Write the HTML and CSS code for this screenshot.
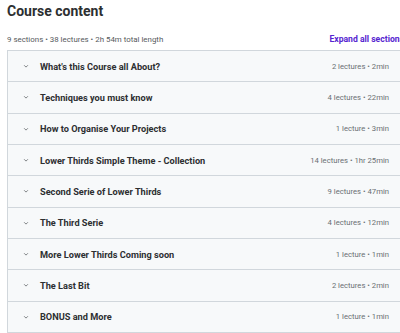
FILE: index.html
```html
<!DOCTYPE html>
<html>
<head>
<meta charset="utf-8">
<link rel="stylesheet" href="styles.css">
</head>
<body>
<div class="page">
  <h2 class="title">Course content</h2>
  <div class="meta">
    <span class="summary">9 sections • 38 lectures • 2h 54m total length</span>
    <span class="expand">Expand all sections</span>
  </div>
  <div class="sections">
    <div class="row"><svg class="chev" viewBox="0 0 8 8"><path d="M1.5 3 L4 5.5 L6.5 3" /></svg><span class="name">What's this Course all About?</span><span class="info">2 lectures • 2min</span></div>
    <div class="row"><svg class="chev" viewBox="0 0 8 8"><path d="M1.5 3 L4 5.5 L6.5 3" /></svg><span class="name">Techniques you must know</span><span class="info">4 lectures • 22min</span></div>
    <div class="row"><svg class="chev" viewBox="0 0 8 8"><path d="M1.5 3 L4 5.5 L6.5 3" /></svg><span class="name">How to Organise Your Projects</span><span class="info">1 lecture • 3min</span></div>
    <div class="row"><svg class="chev" viewBox="0 0 8 8"><path d="M1.5 3 L4 5.5 L6.5 3" /></svg><span class="name">Lower Thirds Simple Theme - Collection</span><span class="info">14 lectures • 1hr 25min</span></div>
    <div class="row"><svg class="chev" viewBox="0 0 8 8"><path d="M1.5 3 L4 5.5 L6.5 3" /></svg><span class="name">Second Serie of Lower Thirds</span><span class="info">9 lectures • 47min</span></div>
    <div class="row"><svg class="chev" viewBox="0 0 8 8"><path d="M1.5 3 L4 5.5 L6.5 3" /></svg><span class="name">The Third Serie</span><span class="info">4 lectures • 12min</span></div>
    <div class="row"><svg class="chev" viewBox="0 0 8 8"><path d="M1.5 3 L4 5.5 L6.5 3" /></svg><span class="name">More Lower Thirds Coming soon</span><span class="info">1 lecture • 1min</span></div>
    <div class="row"><svg class="chev" viewBox="0 0 8 8"><path d="M1.5 3 L4 5.5 L6.5 3" /></svg><span class="name">The Last Bit</span><span class="info">2 lectures • 2min</span></div>
    <div class="row"><svg class="chev" viewBox="0 0 8 8"><path d="M1.5 3 L4 5.5 L6.5 3" /></svg><span class="name">BONUS and More</span><span class="info">1 lecture • 1min</span></div>
  </div>
</div>
</body>
</html>
```
FILE: styles.css
```css
html, body {
  margin: 0;
  padding: 0;
  overflow: hidden;
  background: #fff;
}
.page {
  width: 397px;
  padding: 0 0 0 7px;
  font-family: Roboto, "Liberation Sans", sans-serif;
  color: #2d2f31;
}
.title {
  margin: 0;
  padding-top: 3px;
  font-size: 14px;
  line-height: 16px;
  font-weight: 700;
  height: 28px;
  box-sizing: border-box;
}
.meta {
  display: flex;
  justify-content: space-between;
  align-items: center;
  height: 22px;
  font-size: 7.9px;
}
.summary {
  color: #55595c;
}
.expand {
  color: #5624d0;
  font-weight: 700;
  font-size: 8.6px;
  white-space: nowrap;
}
.sections {
  border: 1px solid #d1d7dc;
  border-bottom: none;
}
.row {
  display: flex;
  align-items: center;
  height: 30.33px;
  background: #f7f9fa;
  border-bottom: 1px solid #d1d7dc;
  padding: 0 14px 0 15px;
}
.chev {
  width: 6px;
  height: 6px;
  fill: none;
  stroke: #55595c;
  stroke-width: 1;
  margin-right: 11px;
  flex: none;
}
.name {
  flex: 1;
  font-size: 9.2px;
  font-weight: 700;
  white-space: nowrap;
}
.info {
  font-size: 7.7px;
  color: #6a6f73;
  white-space: nowrap;
}
```
